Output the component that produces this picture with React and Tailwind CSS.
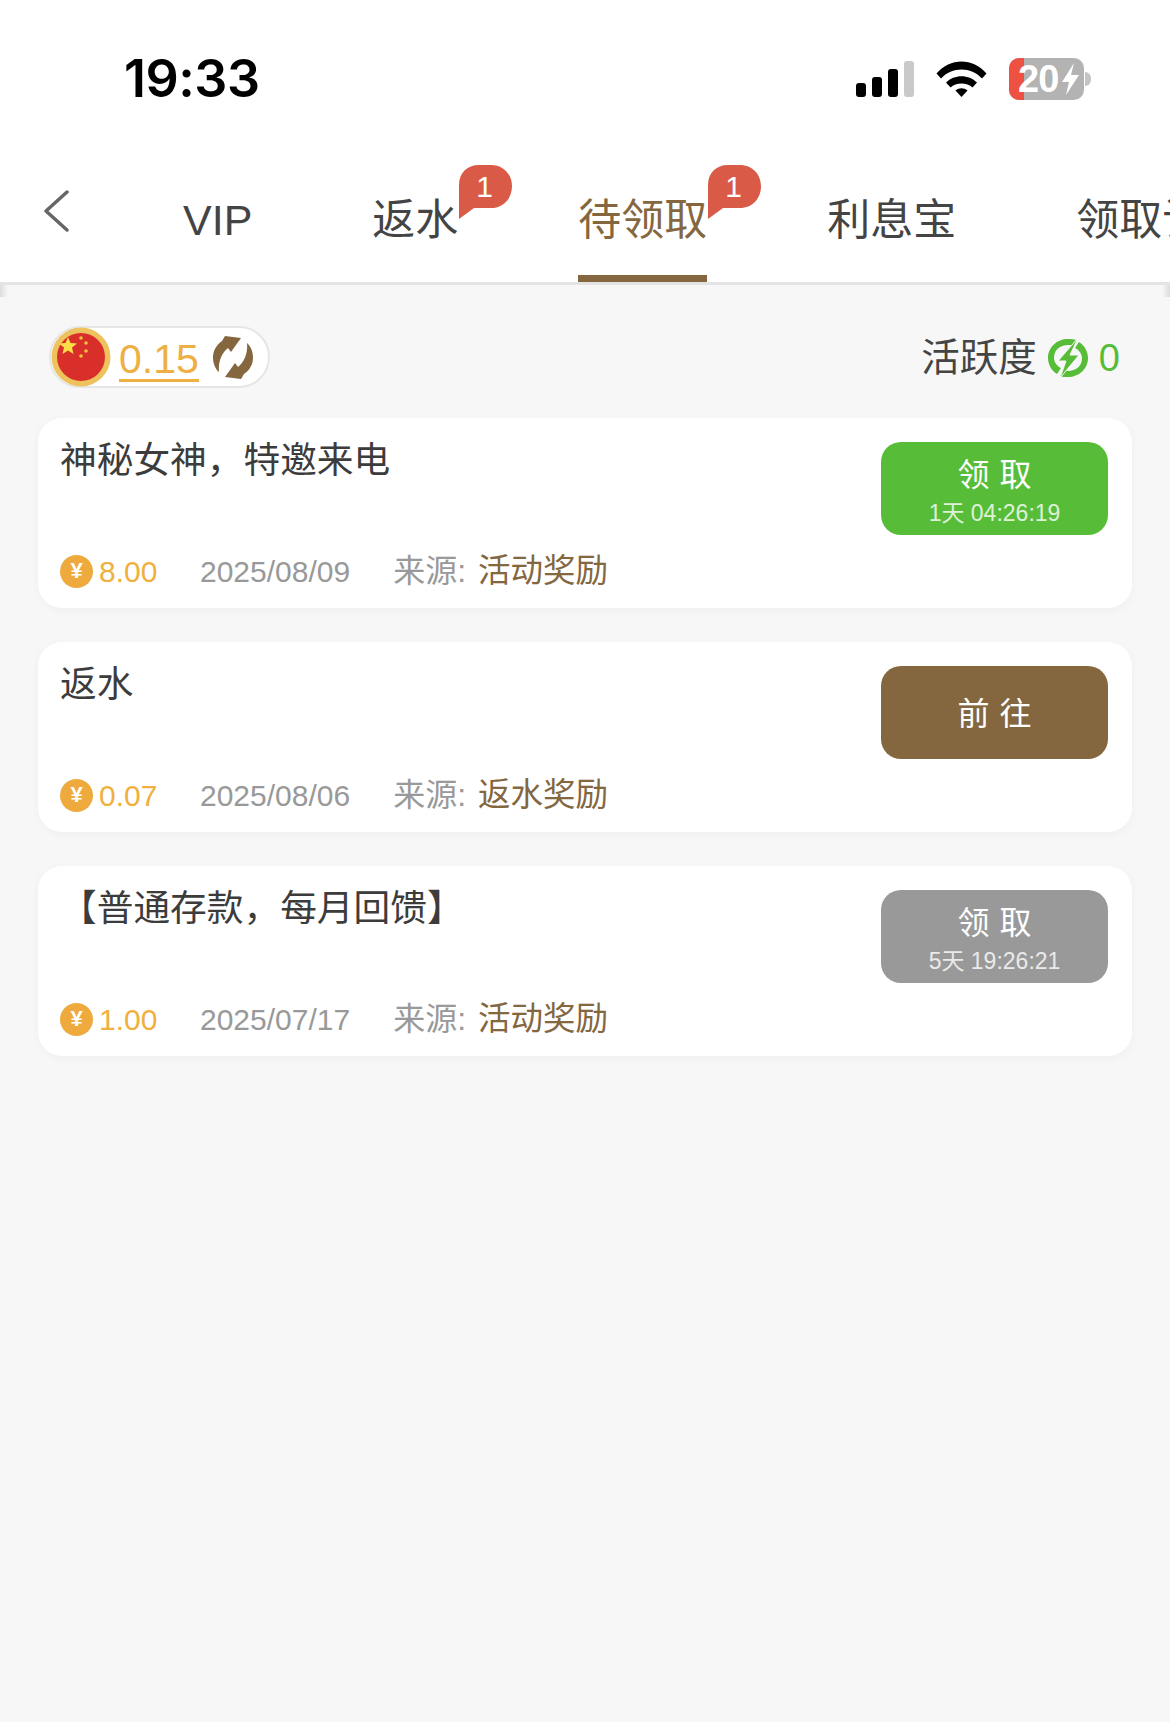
import React from 'react';

function Signal() {
  return (
    <svg width="59" height="36" viewBox="0 0 59 36">
      <rect x="0" y="22" width="10" height="14" rx="3" fill="#000" />
      <rect x="16" y="16" width="10" height="20" rx="3" fill="#000" />
      <rect x="32" y="8" width="10" height="28" rx="3" fill="#000" />
      <rect x="48" y="0" width="10" height="36" rx="3" fill="#c9c9c9" />
    </svg>
  );
}

function Wifi() {
  return (
    <svg width="51" height="36" viewBox="0 0 51 36">
      <path d="M0.5 12.5 C14 -3.5 37 -3.5 50.5 12.5 L46 17.5 C35 5.5 16 5.5 5 17.5 Z" fill="#000" />
      <path d="M10 21.5 C18 13 33 13 41 21.5 L36.5 26.5 C31 21 20 21 14.5 26.5 Z" fill="#000" />
      <path d="M19.5 29.5 C23 26.5 28 26.5 31.5 29.5 L25.5 36 Z" fill="#000" />
    </svg>
  );
}

function Battery() {
  return (
    <div className="flex items-center">
      <div className="relative w-[75px] h-[42px] rounded-[10px] overflow-hidden bg-[#b3b3b3] flex items-center pl-[9px]">
        <div className="absolute left-0 top-0 bottom-0 w-[15px] bg-[#ee5042]" />
        <span className="relative text-white font-bold text-[38px] leading-none tracking-[-1px]">20</span>
        <svg className="relative ml-[2px]" width="20" height="34" viewBox="0 0 20 34">
          <path d="M14 1 L2 20 H9 L6 33 L19 13 H11 Z" fill="#fff" />
        </svg>
      </div>
      <div className="w-[6px] h-[14px] bg-[#c4c4c4] rounded-r-full ml-[1px]" />
    </div>
  );
}

function Badge() {
  return (
    <div className="absolute left-full top-[-29px] w-[55px] h-[54px] text-white">
      <svg className="absolute inset-0" width="55" height="54" viewBox="0 0 55 54">
        <path d="M1 20 C1 8 9 0 21 0 H33 C45 0 54 9 54 21 C54 34 45 43 33 43 H16 L1 54 Z" fill="#d95b47" />
      </svg>
      <span className="absolute left-[18px] top-[6px] text-[30px] leading-[32px]">1</span>
    </div>
  );
}

function Tab({ label, active, badge }) {
  return (
    <div className="relative h-full shrink-0 flex items-center pt-[7px]">
      <span className={`relative text-[43px] leading-[52px] whitespace-nowrap ${active ? 'text-[#84673f]' : 'text-[#444444]'}`}>
        {label}
        {badge && <Badge />}
      </span>
      {active && <div className="absolute left-0 right-0 bottom-0 h-[7px] bg-[#84673f]" />}
    </div>
  );
}

function Flag() {
  return (
    <svg width="60" height="60" viewBox="0 0 60 60" className="shrink-0">
      <circle cx="30" cy="30" r="29.5" fill="#eec25c" />
      <circle cx="30" cy="30" r="24" fill="#d92f2b" />
      <polygon points="17,10 19.5,16 26,16.5 21,20.5 22.5,27 17,23.5 11.5,27 13,20.5 8,16.5 14.5,16" fill="#f9de45" />
      <circle cx="30" cy="11" r="1.8" fill="#f3c23c" />
      <circle cx="35" cy="16" r="1.8" fill="#f3c23c" />
      <circle cx="35" cy="24" r="1.8" fill="#f3c23c" />
      <circle cx="30" cy="29" r="1.8" fill="#f3c23c" />
    </svg>
  );
}

function Refresh() {
  return (
    <svg width="44" height="45" viewBox="0 0 44 45" className="shrink-0">
      <path d="M14 1 L30 3 L20 17 L17 13 C11 18 7 26 8 37 C1 31 -2 15 11 6 Z" fill="#84673f" />
      <path d="M30 44 L14 42 L24 28 L27 32 C33 27 37 19 36 8 C43 14 46 30 33 39 Z" fill="#84673f" />
    </svg>
  );
}

function Bolt() {
  return (
    <svg width="42" height="42" viewBox="0 0 42 42" className="shrink-0">
      <path fillRule="evenodd" d="M21 2 C10 2 1 10 1 21 C1 28 5 34 10 37 L14 31 C10 29 7 25 7 21 C7 13 13 8 21 8 L25 8 L29 3 C27 2 24 2 21 2 Z" fill="#57bd38" />
      <path d="M32 5 L28 11 C32 13 35 17 35 21 C35 29 29 34 21 34 L17 34 L13 39 C15 40 18 40 21 40 C32 40 41 32 41 21 C41 14 37 8 32 5 Z" fill="#57bd38" />
      <path d="M31 1 L11 24 H19 L13 41 L32 18 H23 Z" fill="#57bd38" stroke="#f7f7f7" strokeWidth="1" />
    </svg>
  );
}

function Coin() {
  return (
    <div className="w-[33px] h-[33px] rounded-full bg-[#eeaa3c] text-white font-bold text-[22px] leading-none flex items-center justify-center shrink-0">¥</div>
  );
}

function RewardCard({ title, amount, date, source, children }) {
  return (
    <div className="h-[190px] bg-white rounded-[24px] shadow-[0_2px_8px_rgba(0,0,0,.04)] flex justify-between items-start pl-[22px] pr-[24px]">
      <div className="h-full flex flex-col justify-between pt-[18px] pb-[17px]">
        <div className="text-[36.7px] leading-[50px] text-[#3c3c3c]">{title}</div>
        <div className="flex items-center h-[40px] text-[30px]">
          <Coin />
          <span className="ml-[6px] w-[58px] text-right text-[#f0b040]">{amount}</span>
          <span className="ml-[43px] text-[#999999]">{date}</span>
          <span className="ml-[43px] text-[#999999] text-[32px] whitespace-pre">来源: </span>
          <span className="ml-[3px] text-[#84673f] text-[32.5px]">{source}</span>
        </div>
      </div>
      {children}
    </div>
  );
}

function ActionButton({ label, time, color }) {
  return (
    <div className={`mt-[24px] w-[227px] h-[93px] rounded-[20px] ${color} text-white flex flex-col items-center justify-center ${time ? 'pt-[4px]' : 'pt-[2px]'}`}>
      <div className={`text-[32px] tracking-[10px] pl-[10px] ${time ? 'leading-[42px]' : 'leading-[48px]'}`}>{label}</div>
      {time && <div className="text-[23px] leading-[30px] opacity-80 mt-[2px]">{time}</div>}
    </div>
  );
}

export default function App() {
  return (
    <div className="relative w-[1170px] h-[1722px] overflow-hidden bg-[#f7f7f7] font-['Liberation_Sans','Noto_Sans_CJK_SC',sans-serif]">
      <div className="bg-white border-b-[3px] border-[#e4e4e4]">
        <div className="h-[150px] flex items-center justify-between pl-[124px] pr-[79px] pt-[8px]">
          <span className="font-['Inter',sans-serif] font-semibold text-[52px] leading-none text-black tracking-[-0.5px]">19:33</span>
          <div className="flex items-center">
            <Signal />
            <div className="ml-[21px]"><Wifi /></div>
            <div className="ml-[22px]"><Battery /></div>
          </div>
        </div>
        <div className="h-[132px] flex items-stretch overflow-hidden">
          <div className="w-[183px] shrink-0 flex items-start pl-[43px] pt-[40px]">
            <svg width="26" height="42" viewBox="0 0 26 42" fill="none" stroke="#666666" strokeWidth="3.5" strokeLinecap="round" strokeLinejoin="round">
              <path d="M24 2 L3 21 L24 40" />
            </svg>
          </div>
          <div className="flex gap-[120px]">
            <Tab label="VIP" />
            <Tab label="返水" badge />
            <Tab label="待领取" active badge />
            <Tab label="利息宝" />
            <Tab label="领取记录" />
          </div>
        </div>
      </div>
      <div className="absolute left-0 top-[285px] w-[8px] h-[12px] bg-gradient-to-r from-[#dcdcdc] to-transparent" />
      <div className="absolute right-0 top-[285px] w-[8px] h-[12px] bg-gradient-to-l from-[#dcdcdc] to-transparent" />

      <div className="pt-[41px] px-[38px]">
        <div className="flex items-center justify-between pl-[11px] pr-[12px]">
          <div className="w-[221px] h-[62px] rounded-full bg-white border-2 border-[#e6e6e6] flex items-center">
            <Flag />
            <span className="ml-[8px] mt-[6px] text-[41px] leading-[40px] text-[#eeb044] border-b-[3px] border-[#eeb044]">0.15</span>
            <div className="ml-[12px]"><Refresh /></div>
          </div>
          <div className="flex items-center mt-[2px]">
            <span className="text-[38.5px] leading-none text-[#444444]">活跃度</span>
            <div className="ml-[10px]"><Bolt /></div>
            <span className="ml-[10px] text-[38px] leading-none text-[#57bd38]">0</span>
          </div>
        </div>

        <div className="mt-[30px] flex flex-col gap-[34px]">
          <RewardCard title="神秘女神，特邀来电" amount="8.00" date="2025/08/09" source="活动奖励">
            <ActionButton label="领取" time="1天 04:26:19" color="bg-[#57bd38]" />
          </RewardCard>
          <RewardCard title="返水" amount="0.07" date="2025/08/06" source="返水奖励">
            <ActionButton label="前往" color="bg-[#84673f]" />
          </RewardCard>
          <RewardCard title="【普通存款，每月回馈】" amount="1.00" date="2025/07/17" source="活动奖励">
            <ActionButton label="领取" time="5天 19:26:21" color="bg-[#999999]" />
          </RewardCard>
        </div>
      </div>
    </div>
  );
}
